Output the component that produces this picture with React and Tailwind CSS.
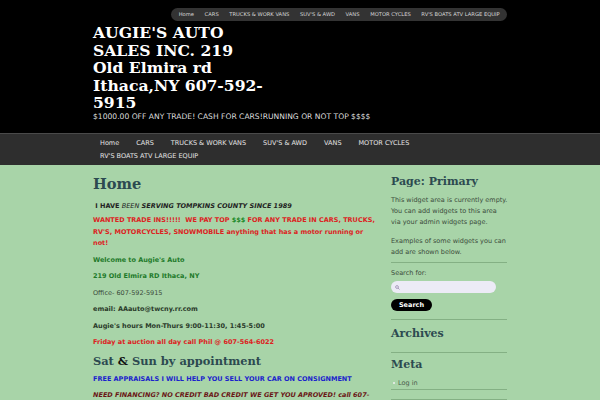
import React from 'react';

const topNav = ['Home', 'CARS', 'TRUCKS & WORK VANS', "SUV'S & AWD", 'VANS', 'MOTOR CYCLES', "RV'S BOATS ATV LARGE EQUIP"];
const titleLines = ["AUGIE'S AUTO", 'SALES INC. 219', 'Old Elmira rd', 'Ithaca,NY 607-592-', '5915'];
const widgetLines = ['This widget area is currently empty.', 'You can add widgets to this area', 'via your admin widgets page.'];
const exampleLines = ['Examples of some widgets you can', 'add are shown below.'];

const sans = { fontFamily: '"DejaVu Sans", Verdana, sans-serif' };
const serif = { fontFamily: '"DejaVu Serif", Georgia, serif' };

function Rule() {
    return <div className="h-px bg-[#84b084] w-full" />;
}

export default function App() {
    return (
        <div className="min-h-[400px] bg-[#a8d4a8] text-[#3b4b3b]" style={sans}>
            {/* Cabecera */}
            <div className="bg-black h-[133px]">
                <div className="w-[414px] mx-auto relative">
                    <div className="absolute top-[8px] right-0 h-[13px] rounded-full bg-[#333333] flex items-center px-[2px]">
                        {topNav.map((item) => (
                            <span key={item} className="px-[5.3px] text-[5.2px] text-[#d8d8d8] whitespace-nowrap leading-none">
                                {item}
                            </span>
                        ))}
                    </div>
                    <div className="pt-[24px]">
                        <h1 className="text-white font-bold text-[15.6px] leading-[17.5px]" style={serif}>
                            {titleLines.map((line) => (
                                <span key={line} className="block whitespace-nowrap">{line}</span>
                            ))}
                        </h1>
                        <p className="text-[7.6px] text-[#dddddd] leading-[10px]">
                            $1000.00 OFF ANY TRADE! CASH FOR CARS!RUNNING OR NOT TOP $$$$
                        </p>
                    </div>
                </div>
            </div>

            {/* Menu */}
            <div className="bg-[#2e2e2e] border-t border-[#4a4a4a] h-[32px]">
                <div className="w-[414px] mx-auto pl-[7px] pt-[2.5px] flex flex-wrap">
                    {topNav.map((item) => (
                        <span key={item} className="mr-[17px] text-[6.5px] leading-[13px] text-[#e4e4e4] whitespace-nowrap">
                            {item}
                        </span>
                    ))}
                </div>
            </div>

            {/* Contenido */}
            <div className="w-[414px] mx-auto flex pt-[9px]">
                <div className="w-[284px] text-[6.5px] leading-[11.5px]">
                    <h2 className="text-[14.6px] leading-[20px] font-bold text-[#2c4a50] mb-[7px]" style={serif}>Home</h2>
                    <p className="mb-[2.5px] font-bold text-[#222]">
                        &nbsp;I HAVE <em className="font-normal">BEEN</em> <em>SERVING TOMPKINS COUNTY SINCE 1989</em>
                    </p>
                    <p className="mb-[5px] font-bold text-[#dd2222]">
                        WANTED TRADE INS!!!!!&nbsp; WE PAY TOP <span className="text-[#1d8a2a]">$$$</span> FOR ANY TRADE IN CARS, TRUCKS, RV'S, MOTORCYCLES, SNOWMOBILE anything that has a motor running or not!
                    </p>
                    <p className="mb-[5px] font-bold text-[#1e7a2a]">Welcome to Augie's Auto</p>
                    <p className="mb-[5px] font-bold text-[#1e7a2a]">219 Old Elmira RD Ithaca, NY</p>
                    <p className="mb-[5px] text-[#3a4a3a]">Office- 607-592-5915</p>
                    <p className="mb-[5px] font-bold text-[#2a3a2a]">email: AAauto@twcny.rr.com</p>
                    <p className="mb-[5px] font-bold text-[#2a3a2a]">Augie's hours Mon-Thurs 9:00-11:30, 1:45-5:00</p>
                    <p className="mb-[4px] font-bold text-[#dd2222]">Friday at auction all day call Phil @ 607-564-6022</p>
                    <h3 className="text-[11.4px] leading-[16px] font-bold text-[#2c4a50] mb-[5px]" style={serif}>
                        Sat <span className="text-[#111]">&amp;</span> Sun by appointment
                    </h3>
                    <p className="mb-[5px] font-bold text-[#1a22cc]">FREE APPRAISALS I WILL HELP YOU SELL YOUR CAR ON CONSIGNMENT</p>
                    <p className="mb-[5px] font-bold italic text-[#6a1616]">NEED FINANCING? NO CREDIT BAD CREDIT WE GET YOU APROVED! call 607-592-5915</p>
                </div>

                <div className="ml-[14px] w-[116px] text-[6.5px] leading-[11px] text-[#3b4b3b]">
                    <h3 className="text-[11px] leading-[16px] font-bold text-[#2c4a50] mb-[4.5px]" style={serif}>Page: Primary</h3>
                    <p className="mb-[8px]">
                        {widgetLines.map((line) => (
                            <span key={line} className="block whitespace-nowrap">{line}</span>
                        ))}
                    </p>
                    <p className="mb-[4.5px]">
                        {exampleLines.map((line) => (
                            <span key={line} className="block whitespace-nowrap">{line}</span>
                        ))}
                    </p>
                    <Rule />
                    <p className="mt-[4.5px] mb-[2.5px]">Search for:</p>
                    <div className="w-[105px] h-[12px] rounded-full bg-[#ecebf6] flex items-center pl-[4px] mb-[6px]">
                        <svg width="5" height="5" viewBox="0 0 10 10" fill="none" stroke="#9a8ab0" strokeWidth="1.6">
                            <circle cx="4" cy="4" r="2.8" />
                            <path d="M6 6l3 3" />
                        </svg>
                    </div>
                    <div className="w-[41px] h-[12px] rounded-full bg-black text-white font-bold text-[6.5px] flex items-center justify-center mb-[8px]">
                        Search
                    </div>
                    <Rule />
                    <h3 className="text-[11px] leading-[16px] font-bold text-[#2c4a50] mt-[6px] mb-[10px]" style={serif}>Archives</h3>
                    <Rule />
                    <h3 className="text-[11px] leading-[16px] font-bold text-[#2c4a50] mt-[4px] mb-[4.5px]" style={serif}>Meta</h3>
                    <div className="flex items-center gap-[3px] pl-[2px] text-[#4a5a4a]">
                        <span className="w-[2px] h-[2px] rounded-full bg-[#f0f0f0]" />
                        <span>Log in</span>
                    </div>
                    <Rule />
                    <div className="h-[9px]" />
                    <Rule />
                </div>
            </div>
        </div>
    );
}
